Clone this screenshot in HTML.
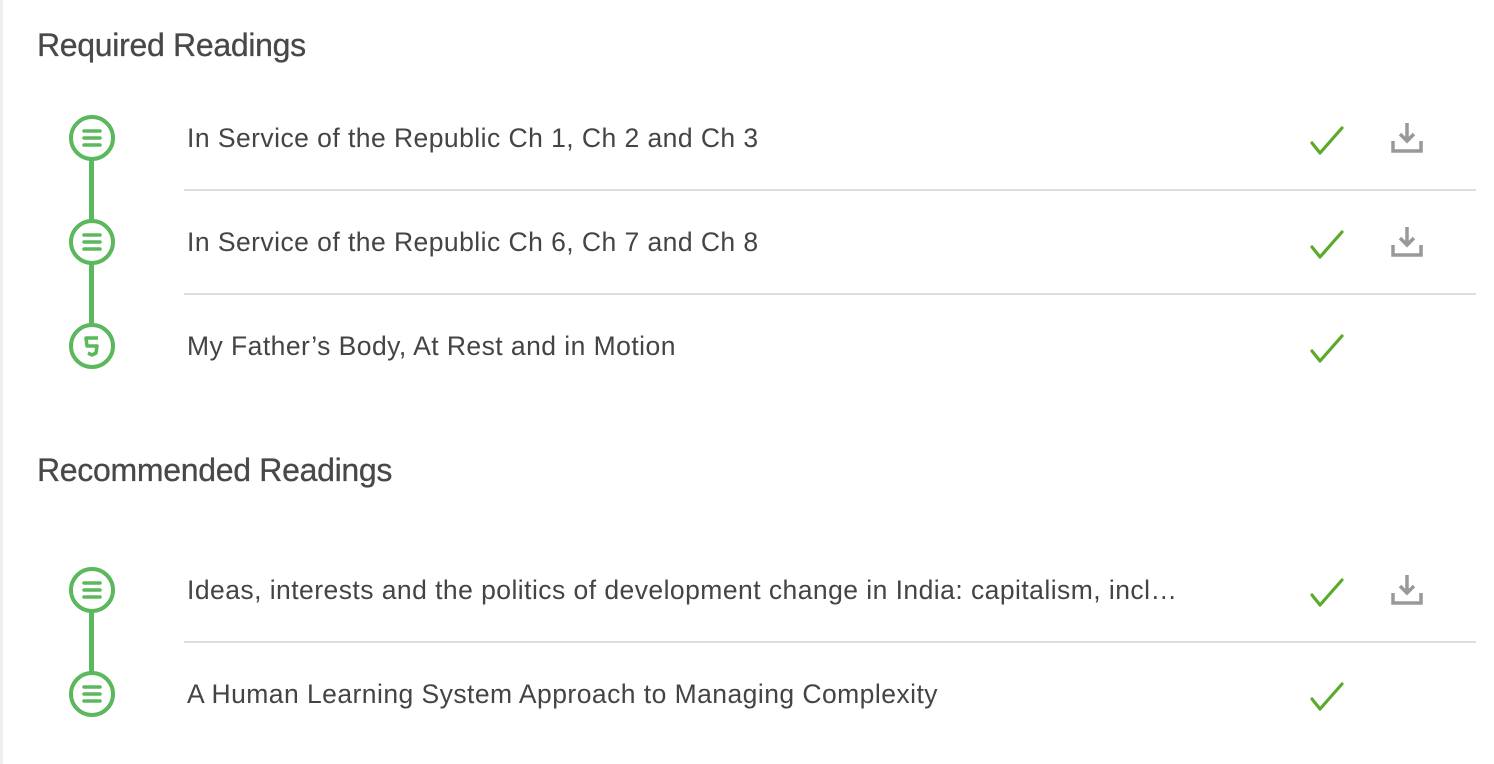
<!DOCTYPE html><html><head><style>
body{margin:0;width:1494px;height:764px;background:#fff;font-family:"Liberation Sans",sans-serif;position:relative;overflow:hidden}
.bl{position:absolute;left:0;top:0;width:3px;height:764px;background:#eee}
.h{position:absolute;left:37px;font-size:32px;color:#484848;letter-spacing:-0.3px;-webkit-text-stroke:0.3px #484848}
.t{position:absolute;left:187px;font-size:26.5px;color:#444;line-height:30px;letter-spacing:0.45px;white-space:nowrap}
.sep{position:absolute;left:184px;width:1292px;height:2px;background:#ddd}
.ic{position:absolute;left:68px;width:48px;height:48px}
.ln{position:absolute;left:89px;width:5px;background:#5cb85c}
.ck,.dl{position:absolute}
</style></head><body>
<div class="bl"></div>
<div class="h" style="top:27px">Required Readings</div>
<div class="h" style="top:452px">Recommended Readings</div>
<div class="ln" style="top:160px;height:60px"></div>
<div class="ln" style="top:264px;height:60px"></div>
<div class="ln" style="top:612px;height:60px"></div>
<svg width="0" height="0" style="position:absolute"><defs>
<g id="doc"><circle cx="24" cy="24" r="21" fill="#fff" stroke="#5cb85c" stroke-width="4"/><path d="M16 17h16M16 24h16M16 31h16" stroke="#5cb85c" stroke-width="3.5" stroke-linecap="round"/></g>
<g id="h5"><circle cx="24" cy="24" r="21" fill="#fff" stroke="#5cb85c" stroke-width="4"/><path d="M30 16H18l1 8h10l-1 7-4 2-4-2" fill="none" stroke="#5cb85c" stroke-width="3.5" stroke-linejoin="round"/></g>
<g id="ck"><path d="M2 19l8 10L32 4" fill="none" stroke="#5aab2a" stroke-width="3.2" stroke-linecap="round" stroke-linejoin="round"/></g>
<g id="dl"><path d="M16 2v18M9 13l7 7 7-7M2 20v10h28V20" fill="none" stroke="#999" stroke-width="3.5"/></g>
</defs></svg>
<svg class="ic" style="top:114px"><use href="#doc"/></svg>
<svg class="ic" style="top:218px"><use href="#doc"/></svg>
<svg class="ic" style="top:322px"><use href="#h5"/></svg>
<svg class="ic" style="top:566px"><use href="#doc"/></svg>
<svg class="ic" style="top:670px"><use href="#doc"/></svg>
<div class="t" style="top:123px">In Service of the Republic Ch 1, Ch 2 and Ch 3</div>
<div class="t" style="top:227px">In Service of the Republic Ch 6, Ch 7 and Ch 8</div>
<div class="t" style="top:331px">My Father’s Body, At Rest and in Motion</div>
<div class="t" style="top:575px">Ideas, interests and the politics of development change in India: capitalism, incl…</div>
<div class="t" style="top:679px">A Human Learning System Approach to Managing Complexity</div>
<div class="sep" style="top:189px"></div><div class="sep" style="top:293px"></div><div class="sep" style="top:641px"></div>
<svg class="ck" width="34" height="32" style="left:1310px;top:124px"><use href="#ck"/></svg>
<svg class="ck" width="34" height="32" style="left:1310px;top:228px"><use href="#ck"/></svg>
<svg class="ck" width="34" height="32" style="left:1310px;top:332px"><use href="#ck"/></svg>
<svg class="ck" width="34" height="32" style="left:1310px;top:576px"><use href="#ck"/></svg>
<svg class="ck" width="34" height="32" style="left:1310px;top:680px"><use href="#ck"/></svg>
<svg class="dl" width="34" height="34" style="left:1391px;top:121px"><use href="#dl"/></svg>
<svg class="dl" width="34" height="34" style="left:1391px;top:225px"><use href="#dl"/></svg>
<svg class="dl" width="34" height="34" style="left:1391px;top:573px"><use href="#dl"/></svg>
</body></html>
